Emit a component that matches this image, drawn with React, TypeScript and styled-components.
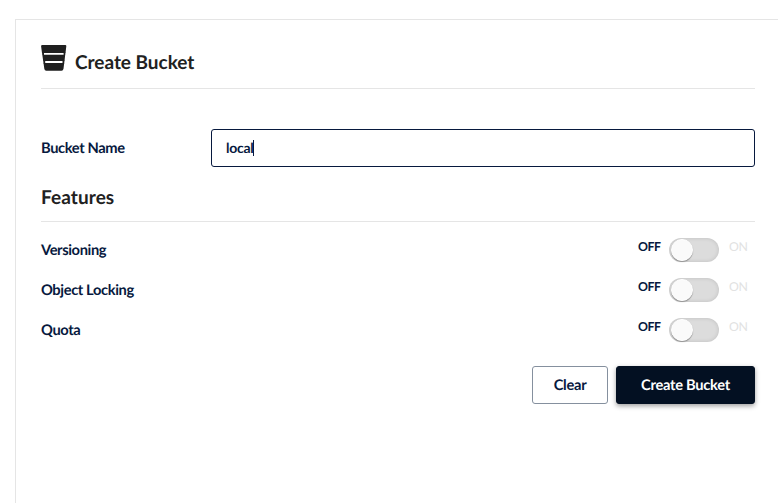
import React from "react";
import styled, { createGlobalStyle } from "styled-components";

const GlobalStyle = createGlobalStyle`
  *, *::before, *::after { box-sizing: border-box; }
  body {
    margin: 0;
    background: #fff;
    color: #07193e;
    font-family: Lato, sans-serif;
    -webkit-font-smoothing: antialiased;
    text-rendering: geometricPrecision;
    overflow: hidden;
  }
`;

const Page = styled.div`
  height: 503px;
  padding: 19px 0 0 15px;
  overflow: hidden;
`;

const Panel = styled.main`
  height: 500px;
  border: 1px solid #e5e5e5;
  border-width: 1px 0 0 1px;
  padding: 25px 23px 0 25px;
`;

const Header = styled.header`
  display: flex;
  height: 44px;
  border-bottom: 1px solid #e5e5e5;
  gap: 8px;
`;

const BucketIcon = styled.svg`
  width: 26px;
  height: 26px;
  display: block;
`;

const Title = styled.h1`
  margin: 6px 0 0;
  font-size: 19px;
  line-height: 24px;
  font-weight: 700;
  letter-spacing: -0.03px;
  color: #212121;
`;

const Field = styled.div`
  display: flex;
  align-items: center;
  margin-top: 40px;
  height: 38px;
`;

const Label = styled.label`
  width: 170px;
  font-size: 14.7px;
  line-height: 20px;
  font-weight: 700;
  letter-spacing: -0.38px;
`;

const InputBox = styled.div`
  flex: 1;
  display: flex;
  align-items: center;
  height: 38px;
  padding: 0 14px;
  border: 1px solid #07193e;
  border-radius: 3px;
  font-size: 14px;
  line-height: 20px;
  font-weight: 700;
  letter-spacing: -0.25px;
`;

const Caret = styled.span`
  width: 1px;
  height: 16px;
  background: #07193e;
  margin-left: -1px;
`;

const SectionTitle = styled.h2`
  margin: 19px 0 0;
  height: 36px;
  border-bottom: 1px solid #e5e5e5;
  font-size: 19px;
  line-height: 24px;
  font-weight: 700;
  letter-spacing: 0.08px;
  color: #212121;
`;

const FeatureList = styled.div`
  margin-top: 8px;
`;

const FeatureRow = styled.div`
  display: flex;
  align-items: center;
  justify-content: space-between;
  height: 40px;
`;

const SwitchGroup = styled.div`
  display: flex;
  align-items: center;
`;

const SwitchText = styled.span<{ $active?: boolean }>`
  width: ${(p) => (p.$active ? "31px" : "26px")};
  margin: 0 0 6px ${(p) => (p.$active ? "0" : "10px")};
  font-size: 12.3px;
  line-height: 16px;
  font-weight: ${(p) => (p.$active ? 700 : 400)};
  letter-spacing: -0.4px;
  color: ${(p) => (p.$active ? "#07193e" : "#e2e2e2")};
`;

const Track = styled.button`
  display: flex;
  align-items: flex-start;
  width: 50px;
  height: 24px;
  padding: 1px 2px;
  border: 0;
  border-radius: 12px;
  background: #dcdcdc;
  box-shadow: inset 0 0 4px rgba(0, 0, 0, 0.13);
`;

const Thumb = styled.span`
  display: block;
  width: 22px;
  height: 22px;
  border: 1px solid #fff;
  border-radius: 50%;
  background: #fafafa;
  box-shadow: 0 1px 1px rgba(0, 0, 0, 0.3);
`;

const Actions = styled.div`
  display: flex;
  justify-content: flex-end;
  gap: 8px;
  margin-top: 16px;
`;

const Button = styled.button<{ $primary?: boolean }>`
  width: ${(p) => (p.$primary ? "139px" : "76px")};
  height: 38px;
  padding: 0 0 1px;
  border: 1px solid ${(p) => (p.$primary ? "#031022" : "#85909e")};
  border-radius: 3px;
  background: ${(p) => (p.$primary ? "#031022" : "#fff")};
  color: ${(p) => (p.$primary ? "#fff" : "#07193e")};
  box-shadow: ${(p) => (p.$primary ? "0 2px 5px rgba(0, 0, 0, 0.38)" : "none")};
  font: 700 14.7px/20px Lato, sans-serif;
  letter-spacing: -0.28px;
  text-rendering: geometricPrecision;
`;

const features = ["Versioning", "Object Locking", "Quota"];

export default function App() {
  return (
    <>
      <GlobalStyle />
      <Page>
        <Panel>
          <Header>
            <BucketIcon viewBox="0 0 26 26" fill="#1f1f1f" aria-hidden="true">
              <path d="M1.3 0H24.2Q25.5 0 25.3 1.3L24.5 8H1L.1 1.3Q0 0 1.3 0Z" />
              <path d="M1.3 9.8H24.2L23.5 16H2.2ZM2.5 18.1H23.2L22.5 23.8Q22.2 25.8 20.5 25.8H5.3Q3.6 25.8 3.3 23.8Z" />
              <path d="M1 7.5H3V10H1.3ZM22.6 7.5H24.5L24.2 10H22.6ZM2.2 15.5H4.2V18.5H2.5ZM21.5 15.5H23.5L23.2 18.5H21.5Z" />
            </BucketIcon>
            <Title>Create Bucket</Title>
          </Header>
          <Field>
            <Label>Bucket Name</Label>
            <InputBox role="textbox">
              <span>local</span>
              <Caret />
            </InputBox>
          </Field>
          <SectionTitle>Features</SectionTitle>
          <FeatureList>
            {features.map((name) => (
              <FeatureRow key={name}>
                <Label>{name}</Label>
                <SwitchGroup>
                  <SwitchText $active>OFF</SwitchText>
                  <Track role="switch" aria-checked={false} aria-label={name}>
                    <Thumb />
                  </Track>
                  <SwitchText>ON</SwitchText>
                </SwitchGroup>
              </FeatureRow>
            ))}
          </FeatureList>
          <Actions>
            <Button>Clear</Button>
            <Button $primary>Create Bucket</Button>
          </Actions>
        </Panel>
      </Page>
    </>
  );
}
